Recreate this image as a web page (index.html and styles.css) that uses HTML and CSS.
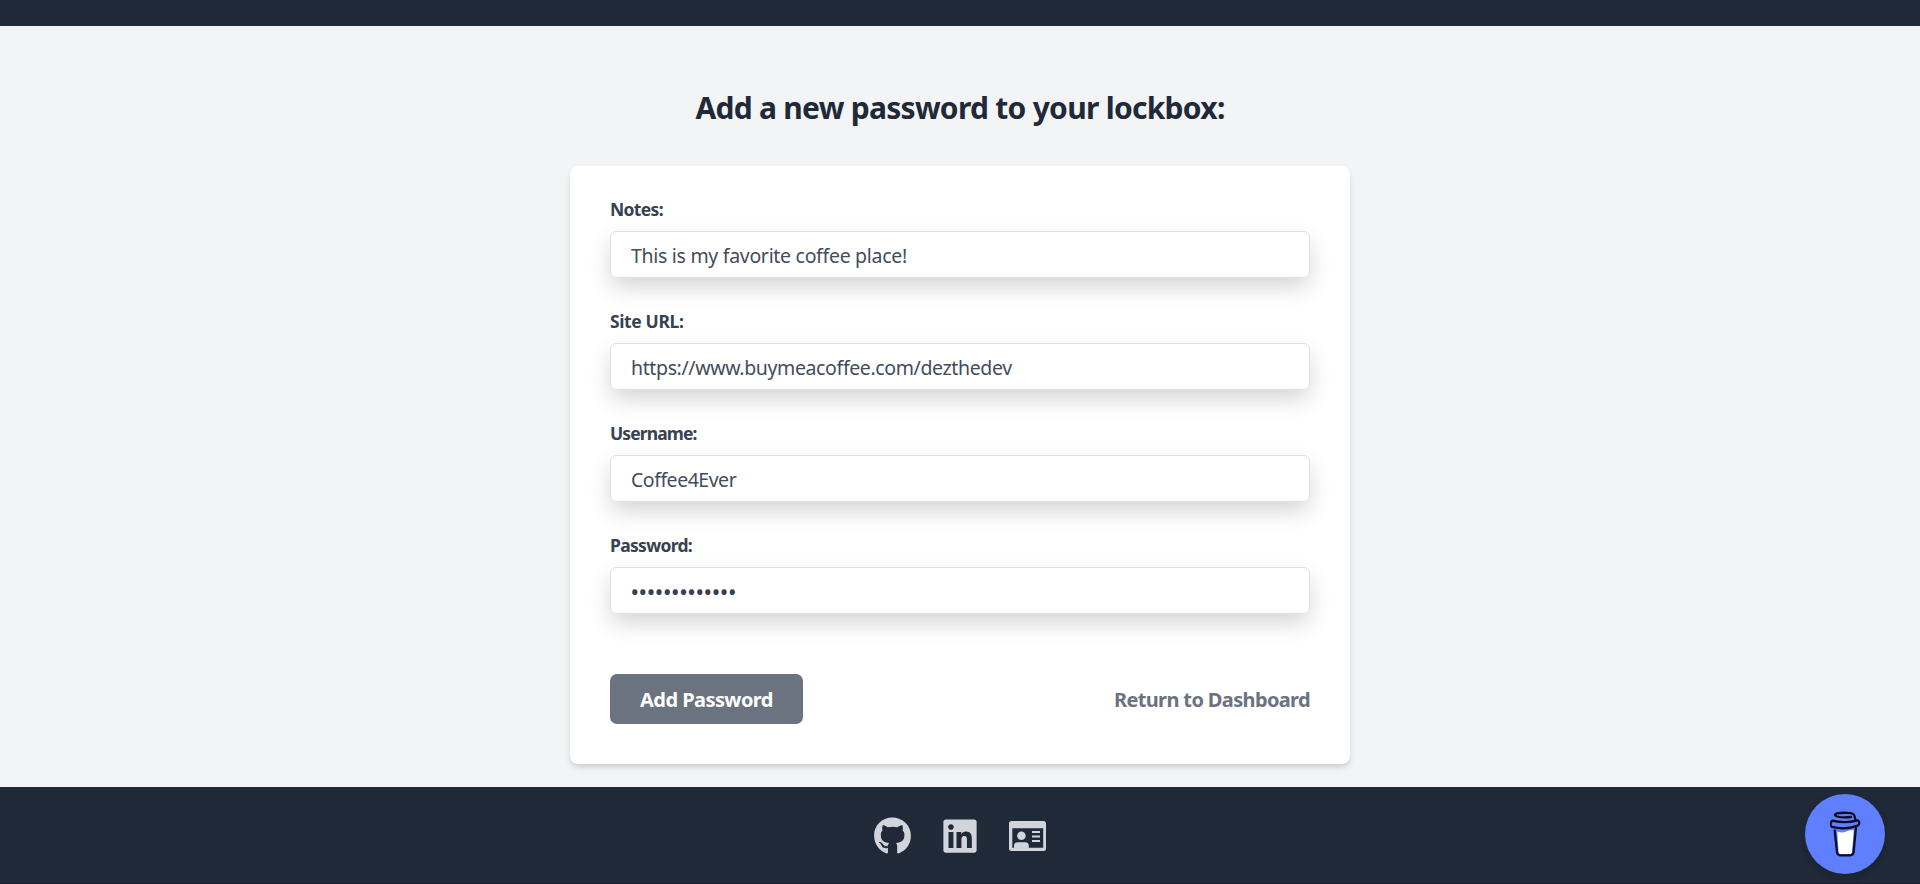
FILE: index.html
```html
<!DOCTYPE html>
<html lang="en">
<head>
<meta charset="utf-8">
<title>Lockbox</title>
<link rel="stylesheet" href="styles.css">
</head>
<body>
<header class="topbar"></header>
<main class="content">
  <h1 class="title"><span>Add a new password to your lockbox:</span></h1>
  <form class="card">
    <div class="field">
      <label class="label notes" for="notes">Notes:</label>
      <input class="input in-notes" id="notes" type="text" value="This is my favorite coffee place!">
    </div>
    <div class="field">
      <label class="label site" for="site">Site URL:</label>
      <input class="input in-site" id="site" type="text" value="https://www.buymeacoffee.com/dezthedev">
    </div>
    <div class="field">
      <label class="label user" for="user">Username:</label>
      <input class="input in-user" id="user" type="text" value="Coffee4Ever">
    </div>
    <div class="field">
      <label class="label pass" for="pass">Password:</label>
      <input class="input in-pass" id="pass" type="text" value="•••••••••••••">
    </div>
    <div class="actions">
      <button class="button" type="button">Add Password</button>
      <a class="return">Return to Dashboard</a>
    </div>
  </form>
</main>
<footer class="footer">
  <svg class="icon github" viewBox="0 0 496 512"><path d="M165.9 397.4c0 2-2.3 3.6-5.2 3.6-3.3.3-5.6-1.3-5.6-3.6 0-2 2.3-3.6 5.2-3.6 3-.3 5.6 1.3 5.6 3.6zm-31.1-4.5c-.7 2 1.3 4.3 4.3 4.9 2.6 1 5.6 0 6.2-2s-1.3-4.3-4.3-5.2c-2.6-.7-5.5.3-6.2 2.3zm44.2-1.7c-2.9.7-4.9 2.6-4.6 4.9.3 2 2.9 3.3 5.9 2.6 2.9-.7 4.9-2.6 4.6-4.6-.3-1.9-3-3.2-5.9-2.9zM244.8 8C106.1 8 0 113.3 0 252c0 110.9 69.8 205.8 169.5 239.2 12.8 2.3 17.3-5.6 17.3-12.1 0-6.2-.3-40.4-.3-61.4 0 0-70 15-84.7-29.8 0 0-11.4-29.1-27.8-36.6 0 0-22.9-15.7 1.6-15.4 0 0 24.9 2 38.6 25.8 21.9 38.6 58.6 27.5 72.9 20.9 2.3-16 8.8-27.1 16-33.7-55.9-6.2-112.3-14.3-112.3-110.5 0-27.5 7.6-41.3 23.6-58.9-2.6-6.5-11.1-33.3 2.6-67.9 20.9-6.5 69 27 69 27 20-5.6 41.5-8.5 62.8-8.5s42.8 2.9 62.8 8.5c0 0 48.1-33.6 69-27 13.7 34.7 5.2 61.4 2.6 67.9 16 17.7 25.8 31.5 25.8 58.9 0 96.5-58.9 104.2-114.8 110.5 9.2 7.9 17 22.9 17 46.4 0 33.7-.3 75.4-.3 83.6 0 6.5 4.6 14.4 17.3 12.1C428.2 457.8 496 362.9 496 252 496 113.3 383.5 8 244.8 8z"/></svg>
  <svg class="icon linkedin" viewBox="0 0 448 512"><path d="M416 32H31.9C14.3 32 0 46.5 0 64.3v383.4C0 465.5 14.3 480 31.9 480H416c17.6 0 32-14.5 32-32.3V64.3c0-17.8-14.4-32.3-32-32.3zM135.4 416H69V202.2h66.5V416zm-33.2-243c-21.3 0-38.5-17.3-38.5-38.5S80.9 96 102.2 96c21.2 0 38.5 17.3 38.5 38.5 0 21.3-17.2 38.5-38.5 38.5zm282.1 243h-66.4V312c0-24.8-.5-56.7-34.5-56.7-34.6 0-39.9 27-39.9 54.9V416h-66.4V202.2h63.7v29.2h.9c8.9-16.8 30.6-34.5 62.2-34.5 66.5 0 79.9 43.8 79.9 100.9V416z"/></svg>
  <svg class="icon idcard" viewBox="0 0 37 30"><path fill-rule="evenodd" d="M2.500 0h32A2.500 2.500 0 0 1 37 2.500v25a2.500 2.500 0 0 1-2.500 2.500h-32A2.500 2.500 0 0 1 0 27.500v-25A2.500 2.500 0 0 1 2.500 0zM3.300 7.300v19.500h1.700v-2q0-3.600 3.600-3.600h7.600q3.600 0 3.600 3.600v2h14.400V7.300z"/><circle cx="12.400" cy="14.800" r="4.300"/><path d="M23 10h8v2h-8zM23 14.500h8v2h-8zM23 19h8v2h-8z"/></svg>
</footer>
<div class="coffee">
  <svg class="cup" viewBox="0 0 32 46"><path fill="#fff" d="M8.300 20.500q5 2 8.700 0 3-1.800 7.700-1.500L23 41.500q-.2 1.500-1.800 1.500H11.300q-1.500 0-1.700-1.500z"/><g fill="none" stroke="#0d0c22" stroke-width="2.300" stroke-linecap="round" stroke-linejoin="round"><path d="M22 6Q14 7 8 5.500 3.500 3.800 8 2.300 13 1.500 19 1.900q5.500.2 6.300 2.600L26.500 9"/><path d="M3.500 9.600q12 3.200 25-.3 1.500.3 1.800 2.200.2 2-1.600 3.100-12.700 4.700-25.700 1.300Q1.500 15 1.900 12.500 2.200 9.900 3.500 9.600z"/><path d="M5.700 19.500 8 41.200q.4 3.100 3.300 3.100h9.900q3 0 3.400-3.100L26.900 17"/></g></svg>
</div>
</body>
</html>
```
FILE: styles.css
```css
* { box-sizing: border-box; }
body { margin: 0; height: 884px; overflow: hidden; display: flex; flex-direction: column; background: #f3f4f6; font-family: "Noto Sans", "Open Sans", sans-serif; color: #1f2937; }
.topbar { height: 26px; background: #1f2937; }
.content { flex: 1; display: flex; flex-direction: column; align-items: center; }
.title { margin: 60px 0 40px; height: 40px; line-height: 43px; font-size: 30px; font-weight: 700; white-space: nowrap; letter-spacing: -0.72px; }
.card { width: 780px; height: 598px; padding: 30px 40px 40px; display: flex; flex-direction: column; background: #fff; border-radius: 8px; box-shadow: 0 4px 6px -1px rgba(0,0,0,.1), 0 2px 4px -1px rgba(0,0,0,.06), 0 4px 10px rgba(0,0,0,.04); }
.field { height: 112px; display: flex; flex-direction: column; }
.label { height: 35px; line-height: 26px; font-size: 17.5px; font-weight: 700; color: #374151; align-self: flex-start; white-space: nowrap; }
.notes { letter-spacing: -0.65px; }
.site { letter-spacing: -0.38px; }
.user { letter-spacing: -0.88px; }
.pass { letter-spacing: -0.69px; }
.input { width: 100%; height: 47px; padding: 1px 20px 0; border: 1px solid #e0e1e5; border-radius: 7px; background: #fff; color: #434c5b; font: 400 19.5px/30px "Noto Sans", "Open Sans", sans-serif; outline: 0; box-shadow: 0 10px 22px -1px rgba(0,0,0,.17); }
.in-notes { letter-spacing: -0.3px; }
.in-site { letter-spacing: -0.37px; }
.in-user { letter-spacing: -0.48px; }
.in-pass { padding-top: 2px; color: #374151; font-size: 20px; font-weight: 600; letter-spacing: 0.6px; }
.actions { margin-top: 30px; display: flex; align-items: center; justify-content: space-between; }
.button { width: 193px; height: 50px; padding: 2px 0 0; border: 0; border-radius: 7px; background: #6b7280; color: #fff; font: 700 20px/30px "Noto Sans", "Open Sans", sans-serif; letter-spacing: -0.56px; }
.return { font-size: 20px; font-weight: 700; color: #6b7280; letter-spacing: -0.64px; }
.footer { height: 97px; padding-top: 30px; display: flex; justify-content: center; align-items: flex-start; gap: 32px; background: #1f2937; border-bottom: 1px solid #18202f; }
.icon { display: block; fill: #d1d5db; }
.github { width: 37px; height: 38px; }
.linkedin { width: 34px; height: 38px; }
.idcard { width: 37px; height: 30px; margin-top: 4px; }
.coffee { position: fixed; left: 1805px; top: 794px; width: 80px; height: 80px; border-radius: 50%; background: #5f7fff; box-shadow: 0 4px 8px rgba(0,0,0,.15); display: flex; align-items: center; justify-content: center; }
.cup { width: 32px; height: 46px; }
```
